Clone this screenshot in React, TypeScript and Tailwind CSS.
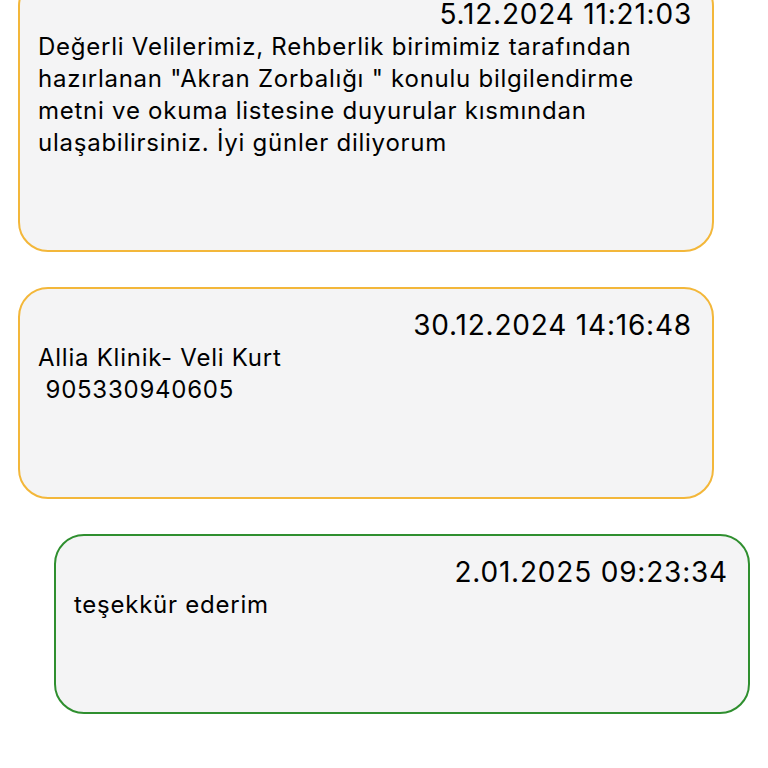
import React from "react";

type Msg = { date: string; lines: string[]; out?: boolean };

const msgs: Msg[] = [
  {
    date: "5.12.2024 11:21:03",
    lines: [
      "Değerli Velilerimiz, Rehberlik birimimiz tarafından",
      'hazırlanan "Akran Zorbalığı " konulu bilgilendirme',
      "metni ve okuma listesine duyurular kısmından",
      "ulaşabilirsiniz. İyi günler diliyorum",
    ],
  },
  {
    date: "30.12.2024 14:16:48",
    lines: ["Allia Klinik- Veli Kurt", " 905330940605"],
  },
  {
    date: "2.01.2025 09:23:34",
    lines: ["teşekkür ederim"],
    out: true,
  },
];

export default function App() {
  return (
    <div
      className="w-[768px] h-[768px] overflow-hidden bg-white text-black"
      style={{ fontFamily: "Inter, 'Noto Sans', sans-serif" }}
    >
      <div className="flex flex-col gap-[35px] -mt-[24px]">
        {msgs.map((m, i) => (
          <div
            key={i}
            className={
              m.out
                ? "ml-[54px] mr-[18px] rounded-[30px] border-2 border-[#2f8f2f] bg-[#f4f4f5] pl-[18px] pr-[20px] pt-[19px] pb-[91px]"
                : "ml-[18px] mr-[54px] rounded-[30px] border-2 border-[#f3b73a] bg-[#f4f4f5] pl-[18px] pr-[20px] pt-[19px] pb-[91px]"
            }
          >
            <div className="text-right text-[28px] leading-[34px] tracking-[0.8px]">{m.date}</div>
            <div className="text-[24px] leading-[32px] tracking-[0.75px] whitespace-pre">
              {m.lines.map((l, j) => (
                <div key={j}>{l}</div>
              ))}
            </div>
          </div>
        ))}
      </div>
    </div>
  );
}
